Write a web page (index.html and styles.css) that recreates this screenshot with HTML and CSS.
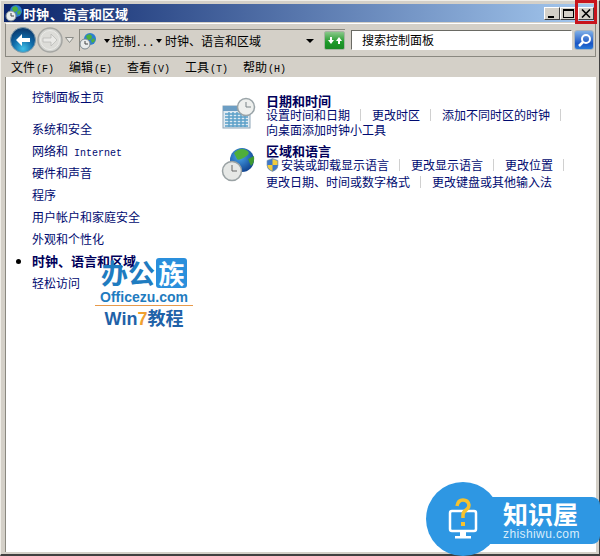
FILE: index.html
```html
<!DOCTYPE html>
<html>
<head>
<meta http-equiv="Content-Type" content="text/html; charset=utf-8"/>
<title>时钟、语言和区域</title>
<link rel="stylesheet" href="styles.css">
</head>
<body>
<div class="window">
  <div class="titlebar">
    <svg class="title-icon" width="18" height="18" viewBox="0 0 18 18">
      <circle cx="11" cy="7" r="6" fill="#2c7fd0"/>
      <path d="M7 4q3-3 5-1t0 4-4 0z" fill="#4fb03e"/>
      <path d="M12 8l3-2 1 3-3 2z" fill="#4fb03e"/>
      <circle cx="6" cy="12" r="5" fill="#e8ecec" stroke="#7d8a90"/>
      <path d="M6 9v3h3" fill="none" stroke="#444"/>
    </svg>
    <span class="title-text">时钟<span class="title-dot">、</span>语言和区域</span>
    <div class="caption-btns">
      <div class="cap-btn"><span class="cap-min"></span></div>
      <div class="cap-btn"><span class="cap-max"></span></div>
      <div class="cap-btn cap-close">
        <svg width="10" height="9" viewBox="0 0 10 9"><path d="M1 0.5l8 8M9 0.5l-8 8" stroke="#000" stroke-width="1.6"/></svg>
      </div>
    </div>
  </div>

  <div class="toolbar">
    <svg class="nav-back" width="26" height="26" viewBox="0 0 26 26">
      <defs>
        <radialGradient id="backfill" cx="50%" cy="85%" r="75%">
          <stop offset="0" stop-color="#3fc0e8"/>
          <stop offset="0.55" stop-color="#0f6aa8"/>
          <stop offset="1" stop-color="#0c3f74"/>
        </radialGradient>
      </defs>
      <circle cx="13" cy="13" r="12.5" fill="url(#backfill)" stroke="#7f99a8"/>
      <path d="M6 13l6-6v4h8v4h-8v4z" fill="#fff"/>
    </svg>
    <svg class="nav-forward" width="26" height="26" viewBox="0 0 26 26">
      <circle cx="13" cy="13" r="12" fill="#d2d3cf" stroke="#a5a6a3" stroke-width="1.5"/>
      <circle cx="13" cy="13" r="9.5" fill="#dcdcd8" stroke="#ecece9"/>
      <path d="M20 13l-6-6v4H6v4h8v4z" fill="#e9e9e6" stroke="#b5b6b3" stroke-width="0.7"/>
    </svg>
    <svg class="nav-drop" width="9" height="6" viewBox="0 0 9 6"><path d="M0.5 0.5h8l-4 5z" fill="#ecece9" stroke="#8b8c88"/></svg>

    <div class="address">
      <svg class="addr-icon" width="18" height="18" viewBox="0 0 18 18">
        <circle cx="11" cy="7" r="6" fill="#2c7fd0"/>
        <path d="M7 4q3-3 5-1t0 4-4 0z" fill="#4fb03e"/>
        <path d="M12 8l3-2 1 3-3 2z" fill="#4fb03e"/>
        <circle cx="6" cy="12" r="5" fill="#e8ecec" stroke="#7d8a90"/>
        <path d="M6 9v3h3" fill="none" stroke="#444"/>
      </svg>
      <span class="crumb-arrow crumb-arrow-first"></span>
      <span class="crumb crumb-short">控制<span class="crumb-dots">...</span></span>
      <span class="crumb-arrow"></span>
      <span class="crumb">时钟、语言和区域</span>
      <span class="addr-drop"></span>
      <div class="refresh">
        <svg width="16" height="14" viewBox="0 0 16 14">
          <path d="M1 6l3-4 3 4H5v3H3V6z" fill="#fff" transform="translate(8 1)"/>
          <path d="M1 8l3 4 3-4H5V5H3v3z" fill="#fff" transform="translate(0 -2)"/>
        </svg>
      </div>
    </div>

    <div class="search">搜索控制面板</div>
    <div class="search-btn">
      <svg width="15" height="15" viewBox="0 0 15 15">
        <circle cx="9" cy="6" r="4" fill="none" stroke="#fff" stroke-width="2"/>
        <path d="M6 9l-4 4" stroke="#fff" stroke-width="2.5"/>
      </svg>
    </div>
  </div>

  <div class="menubar">
    <span class="menu-item">文件<span class="key">(F)</span></span>
    <span class="menu-item">编辑<span class="key">(E)</span></span>
    <span class="menu-item">查看<span class="key">(V)</span></span>
    <span class="menu-item">工具<span class="key">(T)</span></span>
    <span class="menu-item">帮助<span class="key">(H)</span></span>
  </div>

  <div class="content">
    <div class="sidebar">
      <a class="side-link side-home">控制面板主页</a>
      <a class="side-link">系统和安全</a>
      <a class="side-link">网络和<span class="latin"> Internet</span></a>
      <a class="side-link">硬件和声音</a>
      <a class="side-link">程序</a>
      <a class="side-link">用户帐户和家庭安全</a>
      <a class="side-link">外观和个性化</a>
      <a class="side-link side-current">时钟、语言和区域</a>
      <a class="side-link">轻松访问</a>
    </div>

    <div class="main">
      <div class="section section-date">
        <svg class="sec-icon" width="36" height="34" viewBox="0 0 36 34">
          <rect x="2" y="9" width="27" height="22" fill="#dfeaf2" stroke="#8ea6b8"/>
          <rect x="2" y="9" width="27" height="5" fill="#6c9ec4"/>
          <path d="M4 17h23M4 20h23M4 23h23M4 26h23M4 29h23M8 15v15M12 15v15M16 15v15M20 15v15M24 15v15" stroke="#5a9fc8" stroke-width="1.4"/>
          <circle cx="25" cy="10" r="8.5" fill="#eef0ee" stroke="#9aa4a8" stroke-width="1.5"/>
          <path d="M25 5v5h5" fill="none" stroke="#7a8488"/>
        </svg>
        <div class="sec-body">
          <a class="sec-title">日期和时间</a>
          <div class="links">
            <a class="link link-sep">设置时间和日期</a>
            <a class="link link-sep">更改时区</a>
            <a class="link link-sep">添加不同时区的时钟</a>
            <a class="link">向桌面添加时钟小工具</a>
          </div>
        </div>
      </div>

      <div class="section section-region">
        <svg class="sec-icon" width="36" height="36" viewBox="0 0 36 36">
          <defs>
            <radialGradient id="globe" cx="40%" cy="35%" r="70%">
              <stop offset="0" stop-color="#4aa6ec"/>
              <stop offset="1" stop-color="#0e3f8c"/>
            </radialGradient>
          </defs>
          <circle cx="21" cy="13" r="12" fill="url(#globe)"/>
          <path d="M13 6q6-6 12-3t-1 7-8 2-3-6z" fill="#4fae3a"/>
          <path d="M27 12l6-3q1 6-3 10z" fill="#3f9a30"/>
          <circle cx="11" cy="24" r="9.5" fill="#e6e8e6" stroke="#9aa2a4" stroke-width="1.5"/>
          <path d="M11 18v6h5" fill="none" stroke="#666"/>
        </svg>
        <div class="sec-body">
          <a class="sec-title">区域和语言</a>
          <div class="links">
            <a class="link link-sep link-shield">
              <svg class="shield" width="13" height="14" viewBox="0 0 13 14">
                <path d="M6.5 0.5l5.5 2v5q0 4-5.5 6-5.5-2-5.5-6v-5z" fill="#3f78c8" stroke="#8a97a8" stroke-width="0.6"/>
                <path d="M6.5 1l5 2v4H6.5zM6.5 7v6q-5-2-5-6z" fill="#f2cc3c"/>
              </svg>安装或卸载显示语言</a>
            <a class="link link-sep">更改显示语言</a>
            <a class="link link-sep">更改位置</a>
            <a class="link link-sep">更改日期、时间或数字格式</a>
            <a class="link">更改键盘或其他输入法</a>
          </div>
        </div>
      </div>
    </div>
  </div>
</div>

<div class="close-mark"></div>

<div class="wm-office">
  <div class="wm-logo">办公<span class="wm-zu">族</span></div>
  <div class="wm-url">Officezu.com</div>
  <div class="wm-line"></div>
  <div class="wm-win">Win<span class="wm-seven">7</span>教程</div>
</div>

<div class="wm-badge">
  <div class="wm-circle">
    <svg width="34" height="42" viewBox="0 0 34 42">
      <path d="M6 13h22a2 2 0 0 1 2 2v16a2 2 0 0 1-2 2H6a2 2 0 0 1-2-2V15a2 2 0 0 1 2-2z" fill="none" stroke="#fff" stroke-width="2.5"/>
      <path d="M14 34h6v4h-6zM9 38h16v2.5H9z" fill="#fff"/>
      <path d="M11 8q1-6 6-6t6 5q0 3-3 5t-3 5v3" fill="none" stroke="#f6c22e" stroke-width="3.5"/>
      <rect x="15" y="24" width="4" height="4" fill="#f6c22e"/>
    </svg>
  </div>
  <div class="wm-pill">
    <div class="wm-name">知识屋</div>
    <div class="wm-site">zhishiwu.com</div>
  </div>
</div>
</body>
</html>
```

FILE: styles.css
```css
html, body {
  margin: 0;
  padding: 0;
}

body {
  width: 600px;
  height: 556px;
  overflow: hidden;
  background-color: #d4d0c8;
  font-family: "Noto Sans CJK SC", "Liberation Sans", sans-serif;
  font-size: 12px;
  line-height: 15px;
  color: #000;
}

a {
  color: #000a70;
}

.window {
  box-sizing: border-box;
  width: 600px;
  height: 556px;
  padding: 4px 3px 2px 4px;
  display: flex;
  flex-direction: column;
  border-right: 1px solid #404040;
  border-bottom: 2px solid #404040;
  border-top: 1px solid #f0eee8;
  border-left: 1px solid #f0eee8;
}

.titlebar {
  height: 18px;
  flex: none;
  margin-top: -1px;
  margin-left: -1px;
  display: flex;
  align-items: center;
  padding-left: 1px;
  background: linear-gradient(to right, #0a246a, #a6caf0);
}

.title-icon {
  flex: none;
}

.title-text {
  color: #fff;
  font-weight: bold;
  font-size: 13px;
}

.title-dot {
  margin-left: 1px;
}

.caption-btns {
  margin-left: auto;
  margin-right: 2px;
  margin-top: 1px;
  display: flex;
}

.cap-btn {
  width: 16px;
  height: 13px;
  box-sizing: border-box;
  background: #d4d0c8;
  border: 1px solid;
  border-color: #fff #404040 #404040 #fff;
  display: flex;
  align-items: center;
  justify-content: center;
}

.cap-close {
  margin-left: 2px;
}

.cap-min {
  width: 6px;
  height: 2px;
  background: #000;
  margin-top: 6px;
  margin-right: 3px;
}

.cap-max {
  width: 9px;
  height: 6px;
  border: 1px solid #000;
  border-top-width: 2px;
}

.toolbar {
  height: 34px;
  flex: none;
  margin-top: 1px;
  display: flex;
  align-items: center;
  box-sizing: border-box;
  border: 1px solid #8a8880;
  border-top-color: #fff;
  padding-left: 4px;
}

.nav-back,
.nav-forward {
  flex: none;
}

.nav-forward {
  margin-left: 1px;
}

.nav-drop {
  flex: none;
  margin-left: 2px;
  margin-right: 5px;
}

.address {
  width: 266px;
  height: 22px;
  flex: none;
  display: flex;
  align-items: center;
  border-left: 1px solid #8a8880;
  border-top: 1px solid #8a8880;
  box-sizing: border-box;
  font-size: 12px;
}

.addr-icon {
  flex: none;
  margin-left: -1px;
  margin-right: 5px;
}

.crumb-arrow {
  width: 0;
  height: 0;
  flex: none;
  border: 3px solid transparent;
  border-top: 4px solid #000;
  border-bottom: none;
  margin-right: 3px;
}

.crumb-arrow-first {
  margin-left: 2px;
  margin-right: 2px;
}

.crumb {
  white-space: nowrap;
}

.crumb-short {
  width: 41px;
  margin-right: 3px;
}

.crumb-dots {
  letter-spacing: 3px;
  margin-left: 1px;
}

.addr-drop {
  width: 0;
  height: 0;
  border: 4px solid transparent;
  border-top: 4px solid #000;
  border-bottom: none;
  margin-left: auto;
  margin-right: 10px;
}

.refresh {
  width: 21px;
  height: 19px;
  flex: none;
  box-sizing: border-box;
  border: 1px solid #a8b4a4;
  border-radius: 2px;
  background: linear-gradient(#8ac88a, #1e9a2a 60%, #1a8a24);
  display: flex;
  align-items: center;
  justify-content: center;
}

.search {
  width: 221px;
  height: 20px;
  flex: none;
  margin-left: 6px;
  box-sizing: border-box;
  background: #fff;
  border: 1px solid;
  border-color: #6a6a64 #fff #fff #6a6a64;
  padding-left: 10px;
  line-height: 18px;
  color: #000;
}

.search-btn {
  width: 20px;
  height: 20px;
  flex: none;
  margin-left: 2px;
  box-sizing: border-box;
  border: 1px solid #a8b4c0;
  border-radius: 3px;
  background: linear-gradient(#7fb0e8, #1a55c4 70%, #2a7ad8);
  display: flex;
  align-items: center;
  justify-content: center;
}

.menubar {
  height: 20px;
  flex: none;
  display: flex;
  align-items: center;
  padding-left: 6px;
  padding-top: 1px;
  box-sizing: border-box;
}

.menu-item {
  width: 58px;
  flex: none;
  white-space: nowrap;
  color: #000;
}

.key,
.latin {
  font-family: "Liberation Mono", monospace;
  font-size: 10px;
}

.key {
  margin-left: 1px;
}

.content {
  flex: 1;
  background: #fff;
  display: flex;
  border-left: 1px solid #8a8880;
}

.sidebar {
  width: 215px;
  flex: none;
  box-sizing: border-box;
  padding: 9px 0 0 26px;
  display: flex;
  flex-direction: column;
  align-items: flex-start;
}

.side-link {
  height: 22px;
  line-height: 22px;
  white-space: nowrap;
  position: relative;
}

.side-home {
  margin-bottom: 10px;
}

.side-current {
  font-weight: bold;
  font-size: 13px;
  color: #00005a;
}

.side-current::before {
  content: "";
  position: absolute;
  left: -16px;
  top: 9px;
  width: 5px;
  height: 5px;
  border-radius: 50%;
  background: #000;
}

.main {
  flex: 1;
  padding-top: 17px;
  box-sizing: border-box;
}

.section {
  display: flex;
}

.section-region {
  margin-top: 7px;
}

.sec-icon {
  flex: none;
  margin-right: 9px;
  margin-top: 3px;
}

.sec-body {
  width: 312px;
}

.sec-title {
  display: block;
  height: 13px;
  line-height: 13px;
  font-weight: bold;
  font-size: 13px;
  color: #00005a;
}

.links {
  display: flex;
  flex-wrap: wrap;
}

.link {
  white-space: nowrap;
  height: 15px;
  line-height: 15px;
}

.link-sep {
  padding-right: 11px;
  margin-right: 11px;
  position: relative;
}

.link-sep::after {
  content: "";
  position: absolute;
  right: 0;
  top: 2px;
  height: 12px;
  width: 1px;
  background: #d0d0d0;
}

.link-shield {
  display: flex;
  align-items: center;
}

.shield {
  flex: none;
  margin-right: 2px;
}

.section-region .links {
  row-gap: 2px;
}

.close-mark {
  position: absolute;
  left: 575px;
  top: 0;
  width: 22px;
  height: 24px;
  box-sizing: border-box;
  border: 3px solid #c8141c;
}

.wm-office {
  position: absolute;
  left: 95px;
  top: 258px;
  width: 98px;
  display: flex;
  flex-direction: column;
  align-items: center;
  color: #1f7cc0;
  font-weight: bold;
}

.wm-logo {
  font-size: 27px;
  line-height: 30px;
  display: flex;
  align-items: center;
  white-space: nowrap;
}

.wm-zu {
  background: #2a8fdc;
  color: #fff;
  font-size: 26px;
  border-radius: 3px;
  margin-left: 1px;
  width: 31px;
  height: 30px;
  line-height: 29px;
  text-align: center;
}

.wm-url {
  font-family: "Liberation Sans", sans-serif;
  font-size: 14px;
  line-height: 16px;
  margin-top: 1px;
}

.wm-line {
  width: 98px;
  height: 1px;
  background: #e89a4a;
}

.wm-win {
  font-family: "Liberation Sans", "Noto Sans CJK SC", sans-serif;
  font-size: 18px;
  line-height: 22px;
  margin-top: 2px;
  color: #1f62a8;
  white-space: nowrap;
}

.wm-seven {
  color: #f0a030;
}

.wm-badge {
  position: absolute;
  left: 426px;
  top: 482px;
  width: 174px;
  height: 74px;
}

.wm-circle {
  position: absolute;
  left: 0;
  top: 0;
  width: 74px;
  height: 74px;
  border-radius: 50%;
  background: #2e97e3;
  display: flex;
  align-items: center;
  justify-content: center;
}

.wm-pill {
  position: absolute;
  left: 56px;
  top: 15px;
  width: 118px;
  height: 47px;
  box-sizing: border-box;
  background: #2e97e3;
  border-radius: 0 8px 8px 0;
  padding: 3px 0 0 21px;
  color: #fff;
}

.wm-name {
  font-size: 25px;
  line-height: 27px;
  font-weight: bold;
  white-space: nowrap;
}

.wm-site {
  font-family: "Liberation Sans", sans-serif;
  font-size: 12px;
  line-height: 13px;
  letter-spacing: 0.4px;
  margin-top: 1px;
  color: #d8edfb;
  white-space: nowrap;
}
```
